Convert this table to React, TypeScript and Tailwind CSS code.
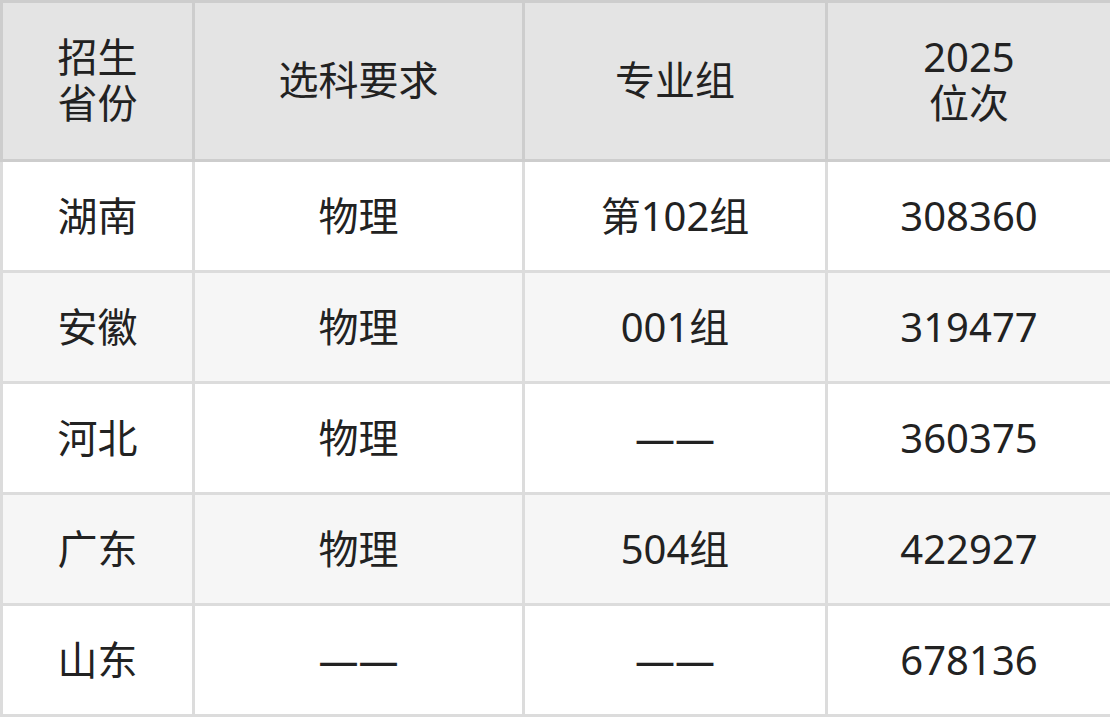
const ROWS = [
  { prov: "湖南", subj: "物理", group: "第102组", rank: "308360" },
  { prov: "安徽", subj: "物理", group: "001组", rank: "319477" },
  { prov: "河北", subj: "物理", group: "——", rank: "360375" },
  { prov: "广东", subj: "物理", group: "504组", rank: "422927" },
  { prov: "山东", subj: "——", group: "——", rank: "678136" },
];

export default function App() {
  return (
    <div className="h-[717px] w-[1110px] bg-white">
      <table
        className="w-[1110px] table-fixed border-collapse text-center text-[40px] leading-[46px] text-[#222]"
        style={{ fontFamily: '"Noto Sans", "Noto Sans CJK SC", sans-serif' }}
      >
        <colgroup>
          <col className="w-[192px]" />
          <col className="w-[330px]" />
          <col className="w-[303px]" />
          <col className="w-[285px]" />
        </colgroup>
        <thead>
          <tr className="h-[159px] bg-[#e4e4e4]">
            <th className="border-[3px] border-[#cdcdcd] px-[40px] pb-[2px] font-normal">招生省份</th>
            <th className="border-[3px] border-[#cdcdcd] pb-[2px] font-normal">选科要求</th>
            <th className="border-[3px] border-[#cdcdcd] pb-[2px] font-normal">专业组</th>
            <th className="border-[3px] border-[#cdcdcd] pb-[2px] font-normal">
              2025
              <br />
              位次
            </th>
          </tr>
        </thead>
        <tbody>
          {ROWS.map((r, i) => (
            <tr key={r.prov} className={i % 2 === 1 ? "h-[111px] bg-[#f6f6f6]" : "h-[111px] bg-white"}>
              <td className="border-[3px] border-[#dcdcdc]">{r.prov}</td>
              <td className="border-[3px] border-[#dcdcdc]">{r.subj}</td>
              <td className="border-[3px] border-[#dcdcdc]">{r.group}</td>
              <td className="border-[3px] border-[#dcdcdc]">{r.rank}</td>
            </tr>
          ))}
        </tbody>
      </table>
    </div>
  );
}
